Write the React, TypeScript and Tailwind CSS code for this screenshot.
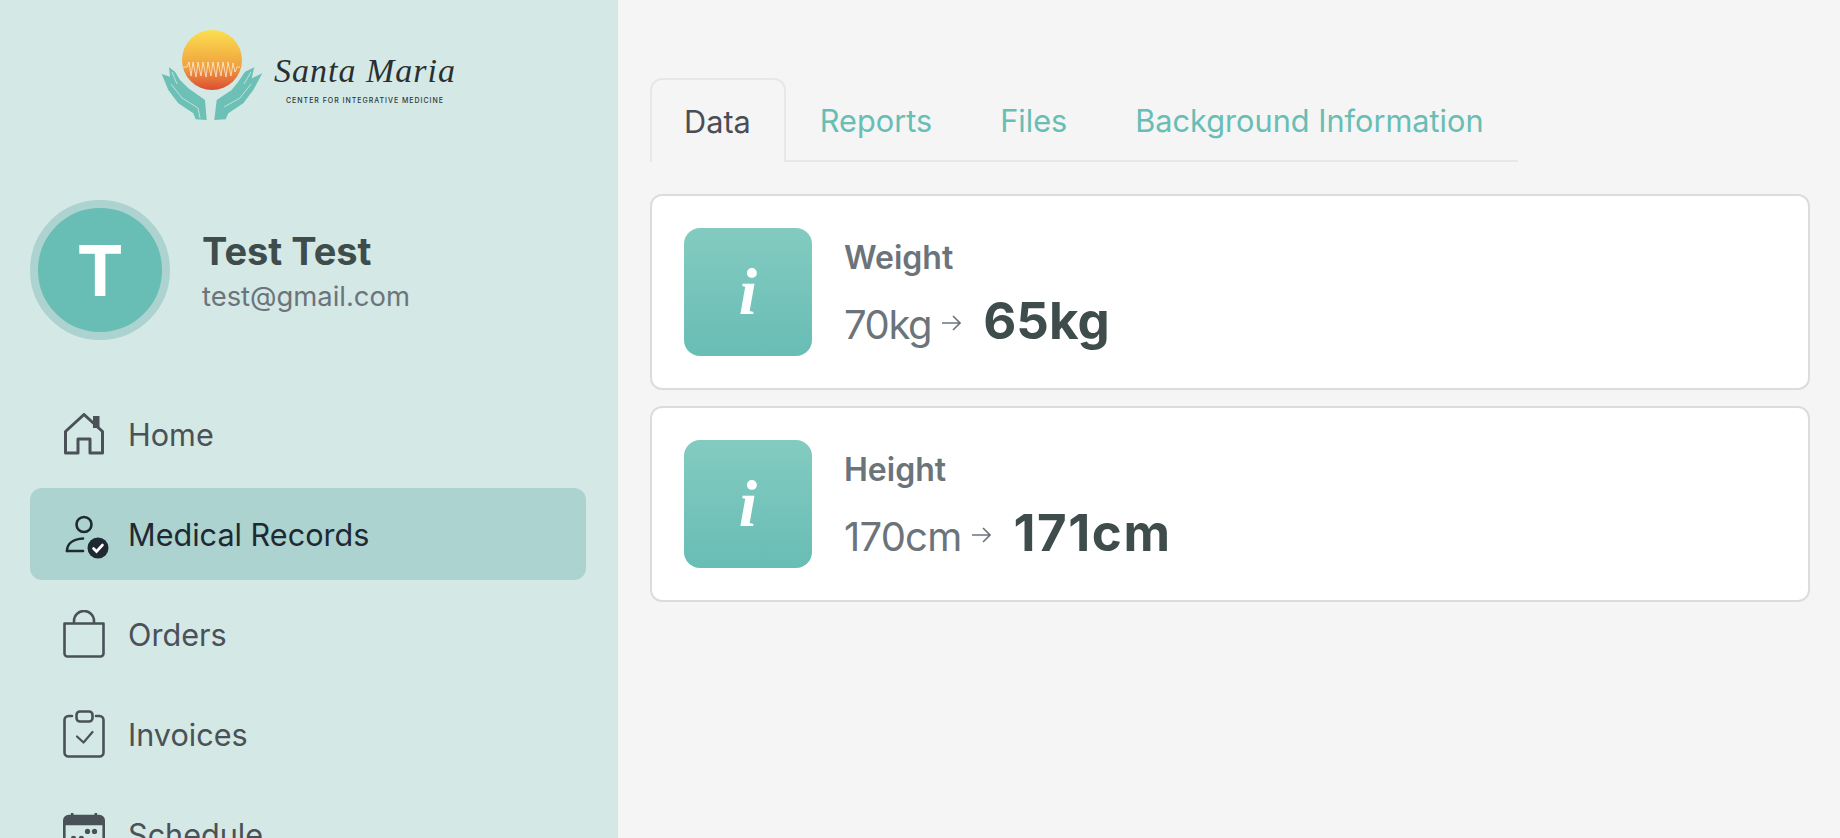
const NAV_ITEMS = [
  { label: "Home", icon: <HomeIcon /> },
  { label: "Medical Records", icon: <RecordsIcon />, active: true },
  { label: "Orders", icon: <BagIcon /> },
  { label: "Invoices", icon: <ClipboardIcon /> },
  { label: "Schedule", icon: <CalendarIcon /> }
];

// the ones in the reference's digits run wider than Inter's, hence the tracking per row
const MEASUREMENTS = [
  { title: "Weight", previous: "70kg", current: "65kg", previousClass: "tracking-[-1.4px]", currentClass: "" },
  { title: "Height", previous: "170cm", current: "171cm", previousClass: "tracking-[-0.8px]", currentClass: "tracking-[1.6px]" }
];

const TABS = ["Data", "Reports", "Files", "Background Information"];

function HomeIcon() {
  return (
    <svg viewBox="0 0 42 42" className="h-[42px] w-[42px]" fill="none" stroke="currentColor" strokeWidth="3" strokeLinejoin="round">
      <path d="M2.5 40 V18.5 L21 1.5 L39.5 18.5 V40 H27 V26 H15 V40 Z" />
      <rect x="30" y="3" width="6.5" height="12" fill="currentColor" stroke="none" />
    </svg>
  );
}

function RecordsIcon() {
  return (
    <svg viewBox="0 0 42 42" className="h-[42px] w-[42px] overflow-visible" fill="none" stroke="currentColor" strokeWidth="2.6" strokeLinecap="round">
      <circle cx="21" cy="11.5" r="7.5" />
      <path d="M4 38 c0 -8 7 -12 16 -12.5" />
      <path d="M4 38 H20" />
      <circle cx="35" cy="35" r="10.5" fill="currentColor" stroke="none" />
      <path d="M30.5 35.5 L33.5 38.5 L39.5 32" stroke="#ffffff" />
    </svg>
  );
}

function BagIcon() {
  return (
    <svg viewBox="0 0 42 48" className="h-[48px] w-[42px]" fill="none" stroke="currentColor" strokeWidth="2.6" strokeLinejoin="round">
      <path d="M1.5 13.5 H40.5 V43.5 a3 3 0 0 1 -3 3 H4.5 a3 3 0 0 1 -3 -3 Z" />
      <path d="M11 13 V11 a10 10 0 0 1 20 0 V13" />
    </svg>
  );
}

function ClipboardIcon() {
  return (
    <svg viewBox="0 0 42 48" className="h-[48px] w-[42px]" fill="none" stroke="currentColor" strokeWidth="2.6" strokeLinecap="round" strokeLinejoin="round">
      <path d="M9 6 H5.5 a4 4 0 0 0 -4 4 V42.5 a4 4 0 0 0 4 4 H36.5 a4 4 0 0 0 4 -4 V10 a4 4 0 0 0 -4 -4 H33" />
      <rect x="13.5" y="1.5" width="16" height="10" rx="3.5" />
      <path d="M14 26.5 L20.5 32.5 L29.5 22" strokeWidth="2.2" />
    </svg>
  );
}

function CalendarIcon() {
  return (
    <svg viewBox="0 0 48 48" className="h-[48px] w-[48px]" fill="none">
      <path d="M9 0 h3 v4 h-3 Z M36 0 h3 v4 h-3 Z" fill="currentColor" />
      <rect x="1.5" y="3.5" width="45" height="43" rx="5" stroke="currentColor" strokeWidth="3" />
      <path d="M1.5 8 a5 5 0 0 1 5 -5 H41.5 a5 5 0 0 1 5 5 V14 H1.5 Z" fill="currentColor" />
      <circle cx="28" cy="21" r="3" fill="currentColor" />
      <circle cx="36" cy="21" r="3" fill="currentColor" />
      <circle cx="12" cy="29" r="3" fill="currentColor" />
      <circle cx="21" cy="29" r="3" fill="currentColor" />
    </svg>
  );
}

// the script wordmark has no matching font here, so it stays as real italic text
function Logo() {
  return (
    <svg viewBox="160 26 300 96" className="h-[96px] w-[300px]" fill="none">
      <defs>
        <linearGradient id="sun" x1="0" y1="0" x2="0" y2="1">
          <stop offset="0" stopColor="#fcdf50" />
          <stop offset="0.6" stopColor="#f0a33f" />
          <stop offset="1" stopColor="#dc4c32" />
        </linearGradient>
      </defs>
      <circle cx="212" cy="60" r="30" fill="url(#sun)" />
      <path
        d="M183 67 H187 L189 62 L191 76 L193 62 L196 77 L198 62 L201 76 L203 62 L206 77 L208 62 L211 76 L213 62 L216 77 L218 62 L221 76 L223 62 L226 77 L228 62 L231 76 L233 63 L235 72 L237 67 H240"
        stroke="#ffffff"
        strokeOpacity="0.7"
        strokeWidth="0.9"
      />
      <path
        d="M161.7 74 L170 76.7 L169 67.3 L175 71.7 L180 80 L188.3 88.3 L205 100 L206.7 120 L195.7 119.3 L193.3 113.3 L178.3 103.3 L168.3 90 Z"
        fill="#6cc0b6"
      />
      <path d="M171 84 L182 98 L198 108 L200 118 M172 72 L177 84" stroke="#d4e8e6" strokeWidth="0.8" />
      <path
        d="M262.3 73.3 L251.7 78.3 L254.3 67.3 L245 71.7 L238.3 81.7 L231.7 90 L216.7 100 L214.3 120 L225.7 119.3 L228.3 113.3 L243.3 103.3 L253.3 90 Z"
        fill="#6cc0b6"
      />
      <path d="M251 84 L240 98 L224 107 M251 72 L244 84" stroke="#d4e8e6" strokeWidth="0.8" />
      <text
        x="274"
        y="82"
        textLength="181"
        lengthAdjust="spacing"
        fontFamily="'Liberation Serif', serif"
        fontStyle="italic"
        fontSize="34"
        fill="#2a2f31"
      >
        Santa Maria
      </text>
      <text
        x="286"
        y="103"
        textLength="157"
        lengthAdjust="spacing"
        fontFamily="Inter, sans-serif"
        fontWeight="500"
        fontSize="7"
        fill="#2f3638"
      >
        CENTER FOR INTEGRATIVE MEDICINE
      </text>
    </svg>
  );
}

function ArrowIcon() {
  return (
    <svg viewBox="0 0 20 20" className="h-5 w-5 shrink-0" fill="none" stroke="currentColor" strokeWidth="1.6">
      <path d="M1 10 H19 M12 3 L19 10 L12 17" />
    </svg>
  );
}

function MeasurementCard({
  title,
  previous,
  current,
  previousClass,
  currentClass
}: {
  title: string;
  previous: string;
  current: string;
  previousClass: string;
  currentClass: string;
}) {
  return (
    <div className="flex items-center gap-8 rounded-xl border-2 border-[#dcdcdc] bg-white p-8">
      <div className="flex h-32 w-32 items-center justify-center rounded-2xl bg-gradient-to-b from-[#83cbc1] to-[#68bdb4]">
        <span className="font-['Liberation_Serif',serif] text-[66px] leading-none font-bold text-white italic">i</span>
      </div>
      <div className="pt-[7px]">
        <p className="text-[32px] leading-10 font-semibold text-[#6c747b]">{title}</p>
        <div className="mt-[15px] flex items-baseline leading-14">
          <span className={`text-[40px] text-[#6c747b] ${previousClass}`}>{previous}</span>
          <span className="ml-[10px] self-center text-[#6c747b]">
            <ArrowIcon />
          </span>
          <span className={`ml-[22px] text-[51px] font-bold text-[#3f4c4c] ${currentClass}`}>{current}</span>
        </div>
      </div>
    </div>
  );
}

export default function App() {
  return (
    <div className="flex h-screen overflow-hidden bg-[#f5f5f5] font-['Inter',sans-serif]">
      <aside className="h-full w-[618px] shrink-0 overflow-hidden bg-[#d4e8e6] pr-[32px] pl-[30px]">
        <div className="flex justify-center pt-[26px] pl-[4px]">
          <Logo />
        </div>
        <div className="mt-[78px] flex items-center gap-8">
          <div className="flex h-[140px] w-[140px] items-center justify-center rounded-full border-8 border-[#acd3cf] bg-[#68bdb4] text-[70px] font-bold text-white">
            T
          </div>
          <div className="pt-[3px]">
            <p className="text-[38px] leading-[44px] font-bold text-[#3f4c4c]">Test Test</p>
            <p className="mt-[5px] text-[27.4px] leading-9 text-[#6c747b]">test@gmail.com</p>
          </div>
        </div>
        <nav className="mt-[48px] flex flex-col gap-2">
          {NAV_ITEMS.map((item) => (
            <a
              key={item.label}
              className={`flex h-[92px] items-center gap-[23px] rounded-xl px-[33px] text-[30.6px] ${
                item.active ? "bg-[#acd3cf] text-[#1f2933]" : "text-[#4a5157]"
              }`}
            >
              <span className="flex w-[42px] shrink-0 items-center justify-center">{item.icon}</span>
              <span className="pt-[2px]">{item.label}</span>
            </a>
          ))}
        </nav>
      </aside>
      <main className="min-w-0 flex-1 pt-[78px] pr-[30px] pl-8">
        <div className="inline-flex border-b-2 border-[#e5e7eb] text-[30.7px] leading-9 text-[#68bdb4]">
          {TABS.map((tab, index) => (
            <button
              key={tab}
              className={
                index === 0
                  ? "-mb-[2px] rounded-t-xl border-2 border-b-0 border-[#e5e7eb] bg-[#f5f5f5] pt-[23px] pr-[33px] pb-[21px] pl-8 text-[#4a4d55]"
                  : "-mb-[2px] border-2 border-transparent px-8 pt-[23px] pb-[21px]"
              }
            >
              {tab}
            </button>
          ))}
        </div>
        <div className="mt-8 flex flex-col gap-4">
          {MEASUREMENTS.map((item) => (
            <MeasurementCard key={item.title} {...item} />
          ))}
        </div>
      </main>
    </div>
  );
}
